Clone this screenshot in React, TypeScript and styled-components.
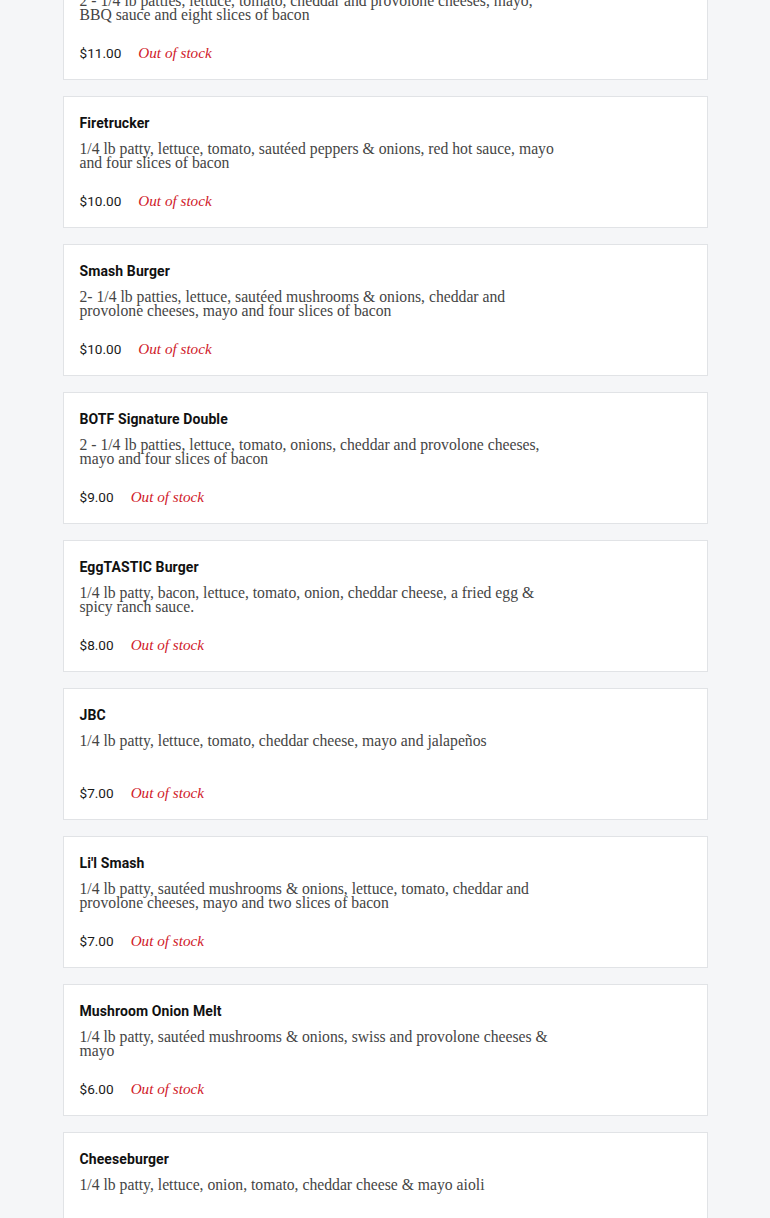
import styled, { createGlobalStyle } from 'styled-components'

type Item = {
  name: string
  description: string
  price: string
}

const items: Item[] = [
  {
    name: 'BOTF Double Bacon BBQ',
    description:
      '2 - 1/4 lb patties, lettuce, tomato, cheddar and provolone cheeses, mayo, BBQ sauce and eight slices of bacon',
    price: '$11.00',
  },
  {
    name: 'Firetrucker',
    description:
      '1/4 lb patty, lettuce, tomato, sautéed peppers & onions, red hot sauce, mayo and four slices of bacon',
    price: '$10.00',
  },
  {
    name: 'Smash Burger',
    description:
      '2- 1/4 lb patties, lettuce, sautéed mushrooms & onions, cheddar and provolone cheeses, mayo and four slices of bacon',
    price: '$10.00',
  },
  {
    name: 'BOTF Signature Double',
    description:
      '2 - 1/4 lb patties, lettuce, tomato, onions, cheddar and provolone cheeses, mayo and four slices of bacon',
    price: '$9.00',
  },
  {
    name: 'EggTASTIC Burger',
    description:
      '1/4 lb patty, bacon, lettuce, tomato, onion, cheddar cheese, a fried egg & spicy ranch sauce.',
    price: '$8.00',
  },
  {
    name: 'JBC',
    description: '1/4 lb patty, lettuce, tomato, cheddar cheese, mayo and jalapeños',
    price: '$7.00',
  },
  {
    name: "Li'l Smash",
    description:
      '1/4 lb patty, sautéed mushrooms & onions, lettuce, tomato, cheddar and provolone cheeses, mayo and two slices of bacon',
    price: '$7.00',
  },
  {
    name: 'Mushroom Onion Melt',
    description:
      '1/4 lb patty, sautéed mushrooms & onions, swiss and provolone cheeses & mayo',
    price: '$6.00',
  },
  {
    name: 'Cheeseburger',
    description: '1/4 lb patty, lettuce, onion, tomato, cheddar cheese & mayo aioli',
    price: '$5.00',
  },
]

export default function App() {
  return (
    <>
      <GlobalStyle />
      <Page>
        <MenuList>
          {items.map((item) => (
            <MenuCard key={item.name}>
              <ItemName>{item.name}</ItemName>
              <ItemDescription>{item.description}</ItemDescription>
              <PriceRow>
                <Price>{item.price}</Price>
                <StockNote>Out of stock</StockNote>
              </PriceRow>
            </MenuCard>
          ))}
        </MenuList>
      </Page>
    </>
  )
}

const GlobalStyle = createGlobalStyle`
  html, body {
    margin: 0;
    padding: 0;
    background-color: #f5f6f8;
    font-family: Roboto, 'Liberation Sans', sans-serif;
  }
`

const Page = styled.div`
  width: 770px;
  height: 1218px;
  overflow: hidden;
`

/* the page is scrolled a bit, so the first card is cut off */
const MenuList = styled.div`
  width: 645px;
  margin: -52px auto 0;
  display: flex;
  flex-direction: column;
  gap: 16px;
`

const MenuCard = styled.div`
  box-sizing: border-box;
  background-color: #ffffff;
  border: 1px solid #e1e3e6;
  padding: 16px;
  display: flex;
  flex-direction: column;
`

const ItemName = styled.div`
  font-family: Roboto, 'Liberation Sans', sans-serif;
  font-size: 14px;
  font-weight: 700;
  letter-spacing: 0.1px;
  line-height: 20px;
  color: #111111;
`

const ItemDescription = styled.div`
  margin-top: 9px;
  max-width: 478px;
  min-height: 28px;
  font-family: 'Liberation Serif', 'DejaVu Serif', serif;
  font-size: 15.7px;
  line-height: 14px;
  color: #454545;
`

const PriceRow = styled.div`
  margin-top: 21px;
  display: flex;
  align-items: center;
  gap: 17px;
  line-height: 20px;
`

const Price = styled.span`
  font-family: Roboto, 'Liberation Sans', sans-serif;
  font-size: 13.6px;
  color: #1a1a1a;
`

const StockNote = styled.span`
  font-family: 'Liberation Serif', 'DejaVu Serif', serif;
  font-size: 15.2px;
  font-style: italic;
  color: #d0202a;
`
